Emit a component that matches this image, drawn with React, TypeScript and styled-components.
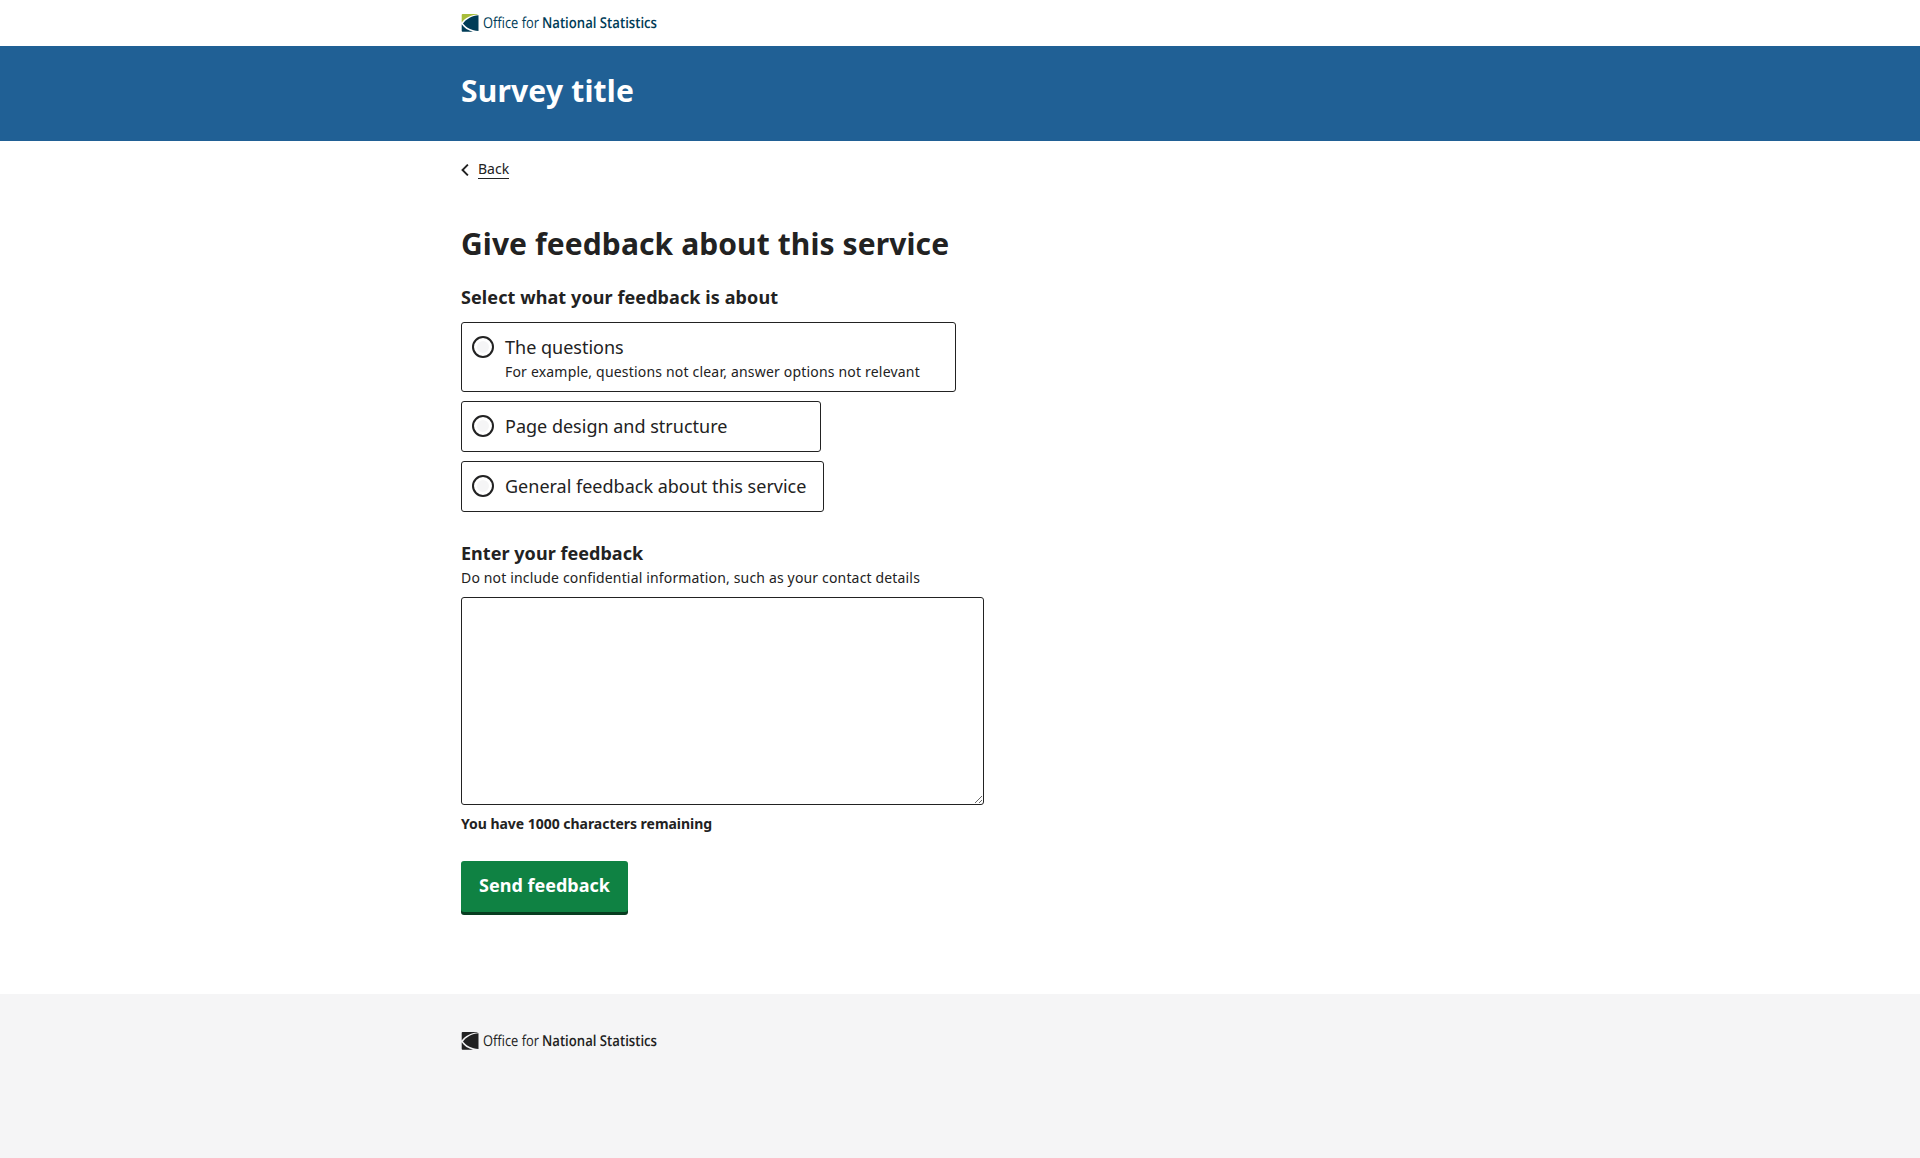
import React from "react";
import styled, { createGlobalStyle } from "styled-components";

const GlobalStyle = createGlobalStyle`
  *, *::before, *::after { box-sizing: border-box; }
  body {
    margin: 0;
    background: #fff;
    color: #222;
    font: 400 18px/25.2px "Noto Sans", "Open Sans", sans-serif;
  }
`;

const Page = styled.div`
  display: flex;
  flex-direction: column;
  min-height: 1158px;
`;

const Container = styled.div`
  width: 998px;
  margin: 0 auto;
`;

const TopBar = styled.header`
  height: 46px;
  padding-top: 14px;
`;

const TitleBar = styled.div`
  height: 95px;
  padding-top: 24px;
  background: #206095;
  color: #fff;
`;

const SurveyTitle = styled.div`
  font-size: 30px;
  line-height: 42px;
  font-weight: 700;
  letter-spacing: 0.2px;
`;

const Main = styled.main`
  flex: 1;
`;

const BackRow = styled.nav`
  display: flex;
  align-items: center;
  height: 20px;
  margin-top: 18px;
`;

const BackIcon = styled.svg`
  flex: none;
  margin-top: 2px;
`;

const BackLink = styled.a`
  margin-left: 9px;
  color: #222;
  font-size: 14px;
  line-height: 19px;
  border-bottom: 1px solid #222;
`;

const Heading = styled.h1`
  margin: 44px 0 0;
  font-size: 30px;
  line-height: 42px;
  font-weight: 700;
  letter-spacing: 0.1px;
`;

const SectionTitle = styled.div<{ $spacing: number }>`
  font-size: 18px;
  line-height: 25px;
  font-weight: 700;
  letter-spacing: ${(p) => p.$spacing}px;
`;

const Fieldset = styled.section`
  margin-top: 20px;
`;

const Options = styled.div`
  display: flex;
  flex-direction: column;
  align-items: flex-start;
  gap: 9px;
  margin-top: 12px;
`;

const Option = styled.label<{ $tall?: boolean }>`
  display: flex;
  gap: 11px;
  min-width: 360px;
  height: ${(p) => (p.$tall ? 70 : 51)}px;
  padding: 12px ${(p) => (p.$tall ? 35 : 17)}px 0 10px;
  border: 1px solid #222;
  border-radius: 3px;
`;

const Radio = styled.input`
  appearance: none;
  flex: none;
  width: 22px;
  height: 22px;
  margin: 1px 0 0;
  border: 2px solid #222;
  border-radius: 50%;
  background: #f5f5f6;
  box-shadow: inset 0 0 0 3px #fff;
`;

const OptionText = styled.span`
  display: flex;
  flex-direction: column;
  white-space: nowrap;
`;

const Hint = styled.span<{ $spacing: number }>`
  display: block;
  padding-top: 1px;
  font-size: 14px;
  line-height: 22px;
  letter-spacing: ${(p) => p.$spacing}px;
`;

const Feedback = styled.section`
  margin-top: 29px;
`;

const TextArea = styled.textarea`
  display: block;
  width: 523px;
  height: 208px;
  margin: 8px 0 0;
  padding: 7px;
  border: 1px solid #222;
  border-radius: 3px;
  font: inherit;
  resize: vertical;
`;

const Remaining = styled.div`
  margin-top: 8px;
  font-size: 14px;
  line-height: 22px;
  font-weight: 700;
  letter-spacing: -0.03px;
`;

const SendButton = styled.button`
  display: block;
  width: 167px;
  height: 51px;
  margin: 26px 0 0;
  padding: 0 0 2px;
  border: 0;
  border-radius: 3px;
  background: #0f8243;
  box-shadow: 0 3px 0 #073d20;
  color: #fff;
  font: 700 18px/25px "Noto Sans", "Open Sans", sans-serif;
`;

const Footer = styled.footer`
  height: 164px;
  padding-top: 38px;
  background: #f5f5f6;
`;

const LogoSvg = styled.svg`
  display: block;
  overflow: visible;
  font-family: "Open Sans", "Noto Sans", sans-serif;
  font-size: 15px;
  text-rendering: geometricPrecision;
`;

function Logo({ ink, accent }: { ink: string; accent: string }) {
  return (
    <LogoSvg width="198" height="20" viewBox="0 0 198 20" role="img">
      <path d="M1.500 0H16.500V.6C9.500 1.200 4.500 3.800 .7 8.500V1Q.7 0 1.500 0Z" fill={accent} />
      <path d="M17.500 1.200V17C10.500 16.400 5.500 13.700 2 9.400C5.500 4.700 11 1.700 17.500 1.200Z" fill={ink} />
      <path d="M.7 10.300C3.200 14 7 16.600 12 17.700H1.500Q.7 17.700 .7 16.800Z" fill={ink} />
      <text x="22" y="14" textLength="56" lengthAdjust="spacingAndGlyphs" fill={ink} fontWeight="400">
        Office for
      </text>
      <text x="81" y="14" textLength="115" lengthAdjust="spacingAndGlyphs" fill={ink} fontWeight="600">
        National Statistics
      </text>
    </LogoSvg>
  );
}

const options = [
  { label: "The questions", hint: "For example, questions not clear, answer options not relevant" },
  { label: "Page design and structure" },
  { label: "General feedback about this service" },
];

export default function App() {
  return (
    <Page>
      <GlobalStyle />
      <TopBar>
        <Container>
          <Logo ink="#003c57" accent="#a8bd3a" />
        </Container>
      </TopBar>
      <TitleBar>
        <Container>
          <SurveyTitle>Survey title</SurveyTitle>
        </Container>
      </TitleBar>
      <Main>
        <Container>
          <BackRow>
            <BackIcon width="8" height="12" viewBox="0 0 8 12" fill="none" stroke="#222" strokeWidth="1.900">
              <path d="M6.900 .6L1.500 6L6.900 11.400" />
            </BackIcon>
            <BackLink>Back</BackLink>
          </BackRow>
          <Heading>Give feedback about this service</Heading>
          <Fieldset>
            <SectionTitle $spacing={0.09}>Select what your feedback is about</SectionTitle>
            <Options>
              {options.map((o) => (
                <Option key={o.label} $tall={!!o.hint}>
                  <Radio type="radio" name="feedback" />
                  <OptionText>
                    {o.label}
                    {o.hint && <Hint $spacing={0.19}>{o.hint}</Hint>}
                  </OptionText>
                </Option>
              ))}
            </Options>
          </Fieldset>
          <Feedback>
            <SectionTitle $spacing={0.04}>Enter your feedback</SectionTitle>
            <Hint $spacing={0.16}>Do not include confidential information, such as your contact details</Hint>
            <TextArea />
            <Remaining>You have 1000 characters remaining</Remaining>
            <SendButton>Send feedback</SendButton>
          </Feedback>
        </Container>
      </Main>
      <Footer>
        <Container>
          <Logo ink="#222" accent="#222" />
        </Container>
      </Footer>
    </Page>
  );
}
